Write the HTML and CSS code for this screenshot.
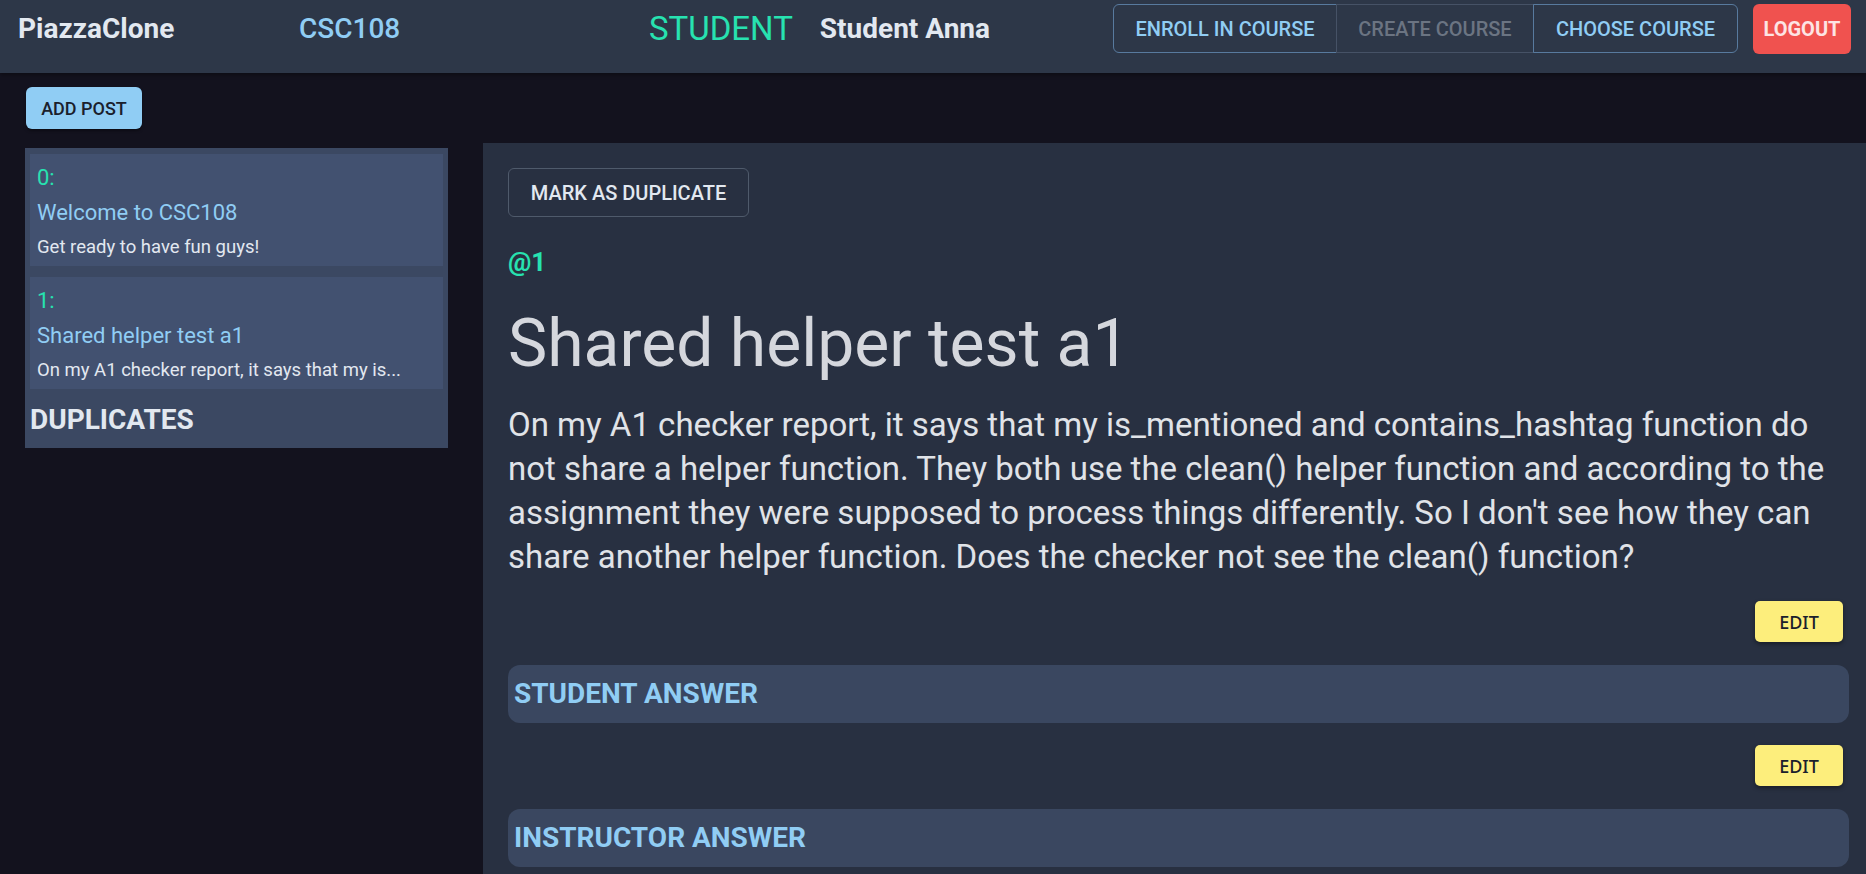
FILE: index.html
```html
<!DOCTYPE html>
<html lang="en">
<head>
<meta charset="utf-8">
<title>PiazzaClone</title>
<link rel="stylesheet" href="styles.css">
</head>
<body>
<header class="topbar">
  <div class="brand">PiazzaClone</div>
  <div class="course">CSC108</div>
  <div class="who">
    <span class="role">STUDENT</span>
    <span class="user">Student Anna</span>
  </div>
  <div class="actions">
    <div class="btn-group">
      <button class="seg seg-enroll">ENROLL IN COURSE</button>
      <button class="seg seg-create" disabled>CREATE COURSE</button>
      <button class="seg seg-choose">CHOOSE COURSE</button>
    </div>
    <button class="logout">LOGOUT</button>
  </div>
</header>
<main class="page">
  <div class="toolbar">
    <button class="add-post">ADD POST</button>
  </div>
  <div class="workspace">
    <aside class="sidebar">
      <div class="post-card">
        <div class="post-num">0:</div>
        <div class="post-title">Welcome to CSC108</div>
        <div class="post-snippet">Get ready to have fun guys!</div>
      </div>
      <div class="post-card">
        <div class="post-num">1:</div>
        <div class="post-title">Shared helper test a1</div>
        <div class="post-snippet">On my A1 checker report, it says that my is...</div>
      </div>
      <h2 class="dup-heading">DUPLICATES</h2>
    </aside>
    <section class="post-view">
      <button class="mark-dup">MARK AS DUPLICATE</button>
      <div class="post-id">@1</div>
      <h1 class="post-heading">Shared helper test a1</h1>
      <p class="post-body">On my A1 checker report, it says that my is_mentioned and contains_hashtag function do not share a helper function. They both use the clean() helper function and according to the assignment they were supposed to process things differently. So I don't see how they can share another helper function. Does the checker not see the clean() function?</p>
      <div class="edit-row"><button class="edit-btn">EDIT</button></div>
      <div class="answer-box"><h3 class="answer-title">STUDENT ANSWER</h3></div>
      <div class="edit-row"><button class="edit-btn">EDIT</button></div>
      <div class="answer-box"><h3 class="answer-title">INSTRUCTOR ANSWER</h3></div>
    </section>
  </div>
</main>
</body>
</html>
```
FILE: styles.css
```css
* { box-sizing: border-box; }

html, body {
  margin: 0;
  padding: 0;
}

body {
  background: #13121e;
  font-family: Roboto, "Liberation Sans", sans-serif;
  color: #e2e8f0;
}

button {
  font-family: inherit;
  cursor: pointer;
}

/* ---------- header ---------- */
.topbar {
  display: flex;
  align-items: center;
  height: 73px;
  padding: 4px 15px 20px 18px;
  background: #2d3748;
  box-shadow: 0 2px 4px rgba(0, 0, 0, 0.35);
  position: relative;
  z-index: 1;
}

.brand {
  width: 281px;
  font-size: 28px;
  font-weight: 700;
  color: #e2e8f0;
}

.course {
  width: 350px;
  font-size: 28px;
  font-weight: 500;
  color: #90cdf4;
}

.who {
  display: flex;
  align-items: center;
  gap: 27px;
}

.role {
  font-size: 33px;
  color: #27e2b0;
}

.user {
  font-size: 28px;
  font-weight: 700;
  color: #e2e8f0;
}

.actions {
  margin-left: auto;
  display: flex;
  align-items: center;
  gap: 15px;
}

.btn-group {
  display: flex;
  height: 49px;
}

.seg {
  height: 49px;
  padding: 0;
  background: transparent;
  border: 1px solid #587a9e;
  font-size: 20px;
  font-weight: 500;
  color: #90cdf4;
}

.seg + .seg { margin-left: -1px; }

.seg-enroll {
  width: 224px;
  border-radius: 6px 0 0 6px;
}

.seg-create {
  width: 198px;
  color: #6b7482;
  border-color: #465266;
  cursor: not-allowed;
  position: relative;
}

.seg-choose {
  width: 205px;
  border-radius: 0 6px 6px 0;
  position: relative;
}

.logout {
  width: 98px;
  height: 50px;
  border: 0;
  border-radius: 6px;
  background: #f0524f;
  color: #fde4e4;
  font-size: 20px;
  font-weight: 700;
  padding: 0;
}

/* ---------- page ---------- */
.toolbar {
  padding: 14px 0 0 26px;
}

.add-post {
  height: 42px;
  width: 116px;
  padding: 0;
  border: 0;
  border-radius: 6px;
  background: #90cdf4;
  color: #1a202c;
  font-size: 18px;
  font-weight: 500;
  box-shadow: 0 2px 3px rgba(0, 0, 0, 0.35);
}

.workspace {
  display: flex;
  align-items: flex-start;
}

/* ---------- sidebar ---------- */
.sidebar {
  width: 423px;
  margin: 19px 0 0 25px;
  padding: 6px 5px 11px;
  background: #3b4862;
}

.post-card {
  background: #425170;
  padding: 8px 7px 5px;
}

.post-card + .post-card { margin-top: 11px; }

.post-num {
  font-size: 22px;
  line-height: 31px;
  color: #27e2b0;
}

.post-title {
  font-size: 22px;
  line-height: 40px;
  color: #90cdf4;
}

.post-snippet {
  font-size: 18.5px;
  line-height: 28px;
  color: #e2e8f0;
  white-space: nowrap;
  overflow: hidden;
  text-overflow: ellipsis;
}

.dup-heading {
  margin: 14px 0 0;
  font-size: 28px;
  line-height: 34px;
  font-weight: 700;
  color: #e2e8f0;
}

/* ---------- post view ---------- */
.post-view {
  flex: 1;
  margin: 14px 0 0 35px;
  min-height: 760px;
  padding: 25px 17px 40px 25px;
  background: #283041;
}

.mark-dup {
  height: 49px;
  width: 241px;
  padding: 0;
  background: transparent;
  border: 1px solid #4f5a6b;
  border-radius: 6px;
  color: #e2e8f0;
  font-size: 20px;
  font-weight: 500;
}

.post-id {
  margin-top: 27px;
  font-size: 26px;
  line-height: 36px;
  font-weight: 700;
  color: #27e2b0;
}

.post-heading {
  margin: 24px 0 0;
  font-size: 66px;
  line-height: 79px;
  font-weight: 400;
  color: #d5d7dd;
}

.post-body {
  margin: 20px 0 0;
  font-size: 33px;
  line-height: 44px;
  color: #e0e3e8;
}

.edit-row {
  display: flex;
  justify-content: flex-end;
  padding-right: 6px;
  margin-top: 22px;
}

.answer-box + .edit-row { margin-top: 22px; }

.edit-btn {
  width: 88px;
  height: 41px;
  padding: 0;
  border: 0;
  border-radius: 5px;
  background: #fdee7c;
  color: #1a202c;
  font-family: "Noto Sans", "Open Sans", sans-serif;
  font-size: 18px;
  font-weight: 500;
  box-shadow: 0 2px 4px rgba(0, 0, 0, 0.4);
}

.answer-box {
  margin-top: 23px;
  height: 58px;
  padding: 0 6px;
  border-radius: 12px;
  background: #3a4760;
}

.answer-title {
  margin: 0;
  font-size: 28px;
  line-height: 58px;
  font-weight: 700;
  color: #90cdf4;
}
```
